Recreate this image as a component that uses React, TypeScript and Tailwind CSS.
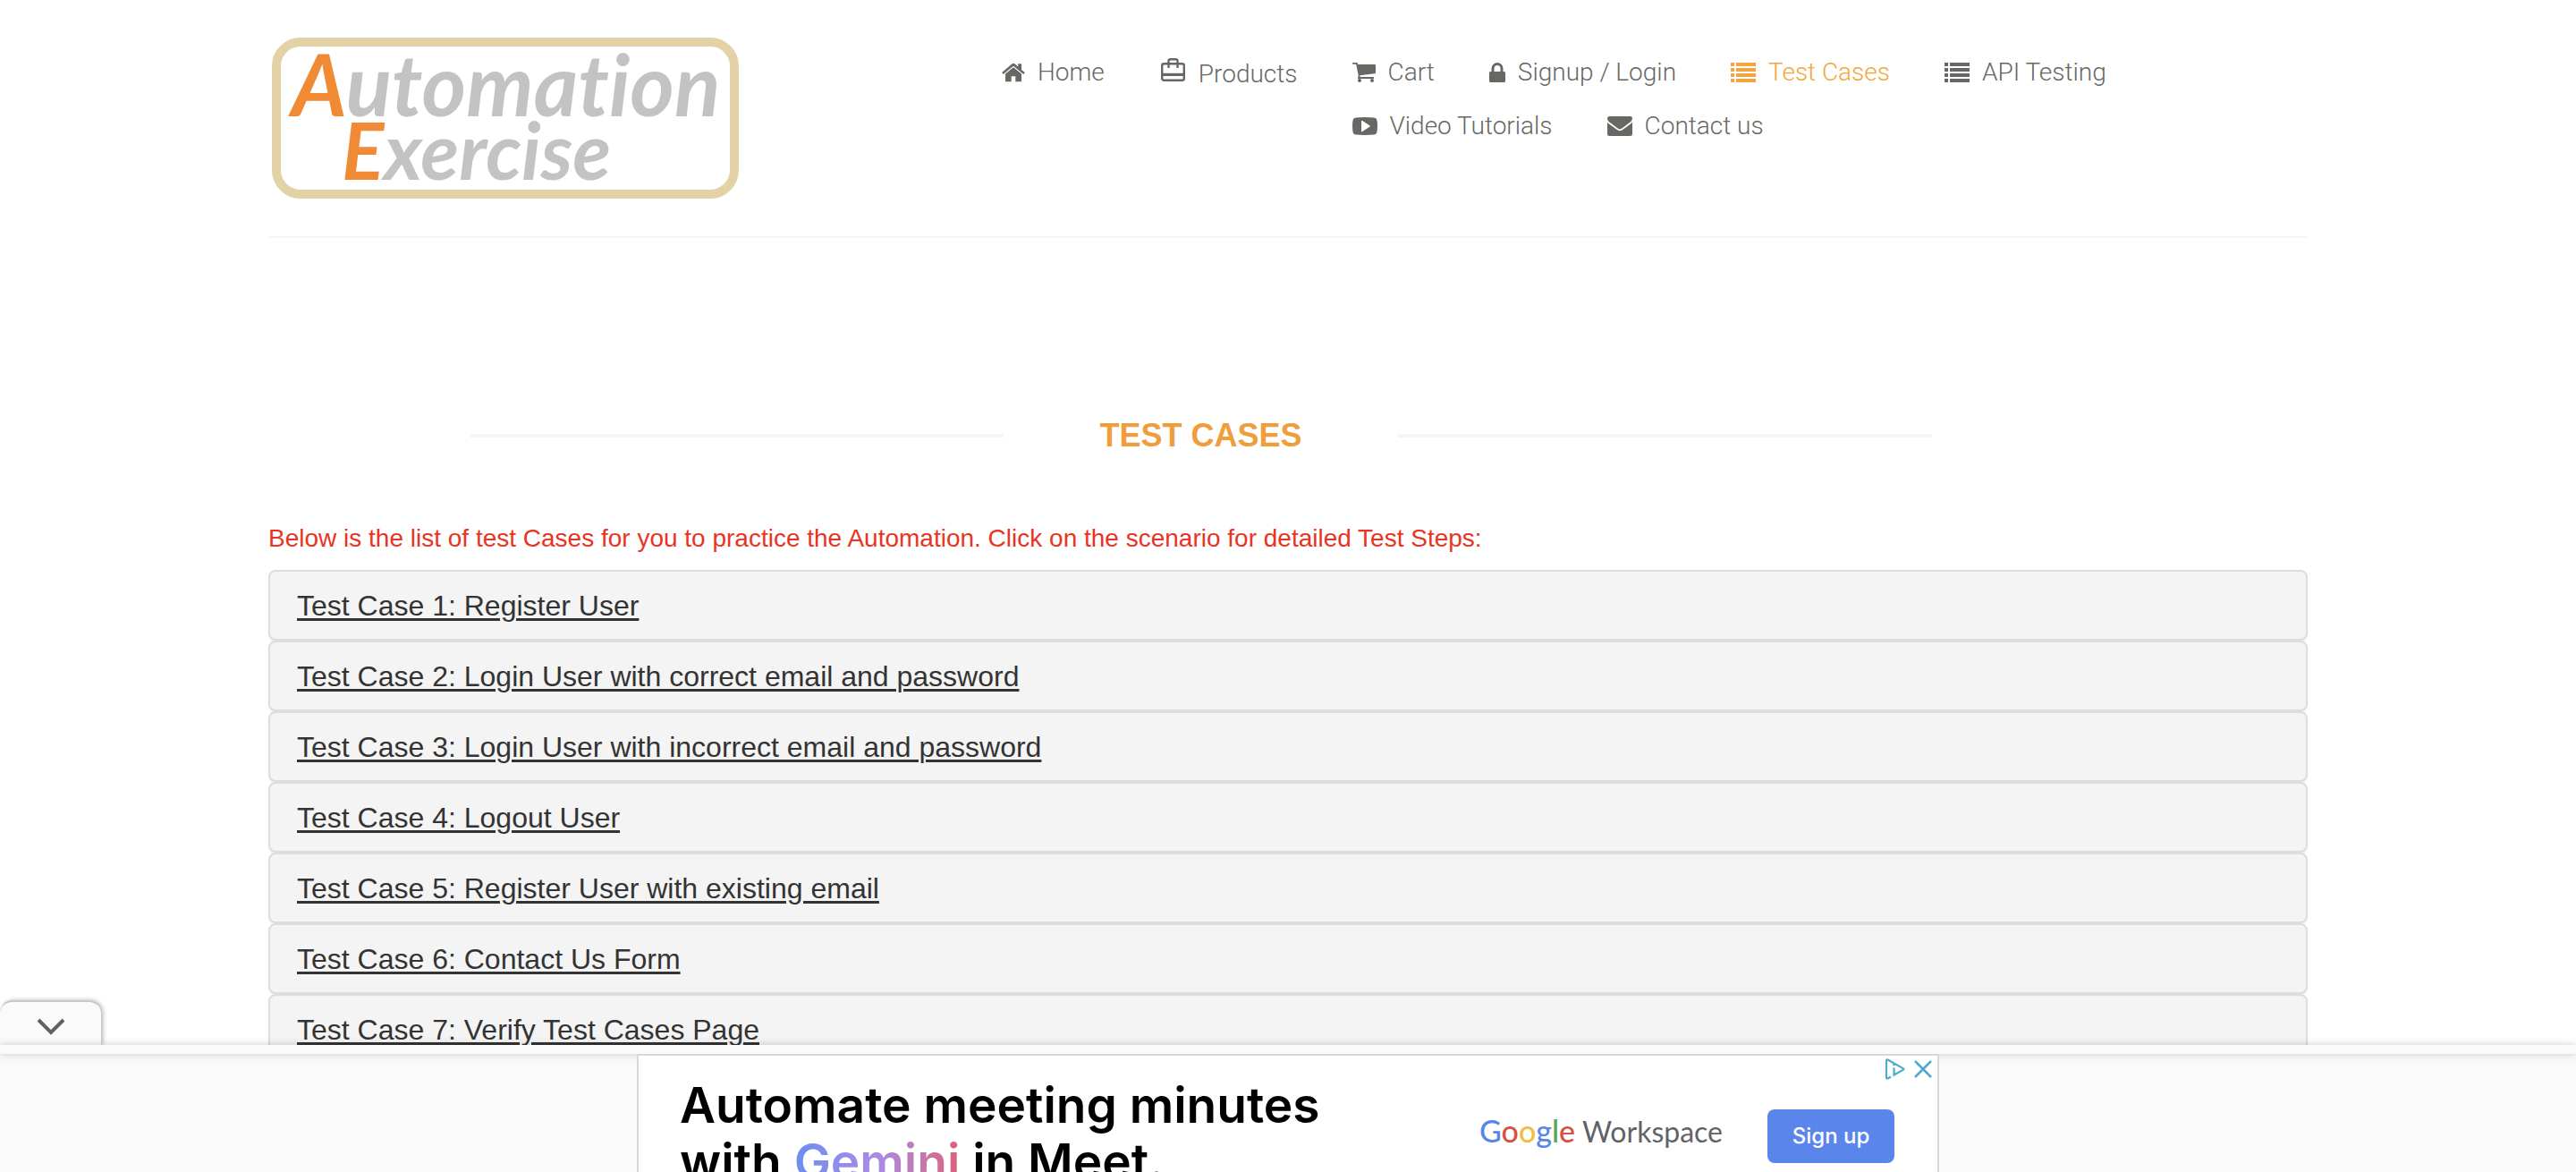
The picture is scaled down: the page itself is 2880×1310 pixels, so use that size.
import type { ReactNode } from 'react';

function IconHome() {
  return (
    <svg viewBox="0 0 26 22" className="h-[22px] w-[26px]" fill="currentColor" aria-hidden="true">
      <path d="M13 5.2 4 12.6V20.4q0 .8.8.8H10.700V15.200h4.600v6H21.200q.8 0 .8-.8V12.600Z" />
      <path d="M13 .8q.8 0 1.400.5l3.800 3.200V1.700q0-.5.5-.5h2.800q.5 0 .5.5v6.200l3.500 2.900q.4.4.1.800l-.9 1q-.3.400-.7.1L13 3.700 2 12.700q-.4.300-.7-.1l-.9-1q-.3-.4.1-.8L11.600 1.300Q12.200.8 13 .8Z" />
    </svg>
  );
}

function IconBag() {
  return (
    <svg viewBox="0 0 30 36" className="h-9 w-[30px]" fill="none" stroke="currentColor" strokeWidth="2.400" aria-hidden="true">
      <rect x="3.200" y="6.200" width="24.600" height="18.600" rx="2" />
      <path d="M10.500 11V3.200q0-2 2-2h6q2 0 2 2V11" />
      <path d="M3.200 18.400h24.600" strokeWidth="3.200" />
    </svg>
  );
}

function IconCart() {
  return (
    <svg viewBox="0 0 26 22" className="h-[22px] w-[26px]" fill="currentColor" aria-hidden="true">
      <path d="M.8 0h4.100q.8 0 1 .8L6.200 2H25q1 0 1 1v8.200q0 .9-.9 1L8.300 14.200l.3 1.900H23.200q.9 0 .9.900t-.9.900H7q-1 0-1-.9 0-.5.8-1.900L4.200 1.800H.8Q0 1.800 0 .9T.8 0Z" />
      <circle cx="8" cy="20" r="2" />
      <circle cx="22" cy="20" r="2" />
    </svg>
  );
}

function IconLock() {
  return (
    <svg viewBox="0 0 18 22" className="h-[22px] w-[18px]" fill="currentColor" aria-hidden="true">
      <path d="M2.500 10V6.500a6.500 6.500 0 0 1 13 0V10h1Q18 10 18 11.500v9q0 1.500-1.500 1.500h-15Q0 22 0 20.500v-9Q0 10 1.500 10ZM5.500 10h7V6.500a3.500 3.500 0 0 0-7 0Z" />
    </svg>
  );
}

function IconList() {
  return (
    <svg viewBox="0 0 28 22" className="h-[22px] w-7" fill="currentColor" aria-hidden="true">
      <path d="M0 0h4v4H0zM6 0h22v4H6zM0 6h4v4H0zM6 6h22v4H6zM0 12h4v4H0zM6 12h22v4H6zM0 18h4v4H0zM6 18h22v4H6z" />
    </svg>
  );
}

function IconVideo() {
  return (
    <svg viewBox="0 0 28 20" className="h-5 w-7" fill="currentColor" fillRule="evenodd" aria-hidden="true">
      <path d="M14 0q6 0 10 .4 2.600.2 3.200 2.200.8 2.600.8 7.400t-.8 7.400q-.6 2-3.200 2.200-4 .4-10 .4T4 19.600Q1.400 19.400.8 17.400 0 14.800 0 10T.8 2.600Q1.400.6 4 .4 8 0 14 0ZM10 4.200v11.600q0 .8.8.4l8.800-5.600q.7-.5 0-1.100L10.800 3.800Q10 3.400 10 4.200Z" />
    </svg>
  );
}

function IconMail() {
  return (
    <svg viewBox="0 0 28 22" className="h-[22px] w-7" fill="currentColor" aria-hidden="true">
      <path d="M2.500 0h23Q28 0 28 2.300 28 4.800 25.300 6.800L17 13q-1.800 1.400-3 1.400T11 13L2.700 6.800Q0 4.800 0 2.500 0 0 2.500 0Z" />
      <path d="M0 6.800Q.7 7.600 1.600 8.200L9.800 14.300q2.500 1.900 4.200 1.900t4.200-1.900L26.400 8.200Q27.300 7.600 28 6.800V19.500Q28 22 25.500 22h-23Q0 22 0 19.500Z" />
    </svg>
  );
}

function NavItem({ icon, label, active, low }: { icon: ReactNode; label: string; active?: boolean; low?: boolean }) {
  return (
    <li>
      <a
        href="#"
        className={`flex items-center gap-3.5 whitespace-nowrap ${active ? 'text-[#f2a63c]' : 'text-[#696763]'} ${low ? 'leading-[44px]' : 'leading-10'}`}
      >
        {icon}
        <span>{label}</span>
      </a>
    </li>
  );
}

const cases = [
  'Test Case 1: Register User',
  'Test Case 2: Login User with correct email and password',
  'Test Case 3: Login User with incorrect email and password',
  'Test Case 4: Logout User',
  'Test Case 5: Register User with existing email',
  'Test Case 6: Contact Us Form',
  'Test Case 7: Verify Test Cases Page',
];

function Logo() {
  return (
    <a
      href="#"
      aria-label="Automation Exercise"
      className="ml-1 flex h-[180px] w-[522px] shrink-0 flex-col rounded-[32px] border-10 border-[#e2d2a6] bg-white pt-1 pl-3 font-['Lato'] leading-[74px] font-bold whitespace-nowrap text-[#c3c3c3] italic [font-variant-ligatures:none]"
    >
      <span className="text-[95px]">
        <span className="text-[#f08a35]">A</span>utomation
      </span>
      <span className="pl-14 text-[88px]">
        <span className="text-[#f08a35]">E</span>xercise
      </span>
    </a>
  );
}

function Header() {
  return (
    <header className="flex items-start justify-between border-b-2 border-[#f5f5f5] pt-[42px] pb-[42px]">
      <Logo />
      <nav className="flex w-[1460px] items-start gap-[61px] pt-[19px] font-['Roboto'] text-[28px] font-light">
        <ul className="flex shrink-0 gap-[61px]">
          <NavItem icon={<IconHome />} label="Home" />
          <NavItem icon={<IconBag />} label="Products" low />
        </ul>
        <ul className="flex flex-wrap gap-x-[61px] gap-y-5">
          <NavItem icon={<IconCart />} label="Cart" />
          <NavItem icon={<IconLock />} label="Signup / Login" />
          <NavItem icon={<IconList />} label="Test Cases" active />
          <NavItem icon={<IconList />} label="API Testing" />
          <NavItem icon={<IconVideo />} label="Video Tutorials" />
          <NavItem icon={<IconMail />} label="Contact us" />
        </ul>
      </nav>
    </header>
  );
}

function AdBar() {
  return (
    <aside className="fixed inset-x-0 bottom-0 font-['Inter']">
      <button
        type="button"
        aria-label="Collapse advertisement"
        className="flex h-[50px] w-[113px] items-center justify-center rounded-t-[14px] border-t-2 border-[#c8c8c8] bg-[#fafafa] pt-2 shadow-[2px_0_5px_rgba(0,0,0,0.3)]"
      >
        <svg viewBox="0 0 32 20" className="h-5 w-8" fill="none" stroke="#616161" strokeWidth="4" aria-hidden="true">
          <path d="M2 2l14 14L30 2" />
        </svg>
      </button>
      <div className="relative h-2.5 bg-[#fafafa] shadow-[0_0_10px_rgba(0,0,0,0.2)]" />
      <div className="flex h-[132px] justify-center overflow-hidden bg-[#fafafa]">
        <div className="relative flex h-[180px] w-[1456px] items-start justify-between border-2 border-[#d8d8d8] bg-white pt-6 pr-12 pl-[46px]">
          <p className="text-[55px] leading-[63px] font-semibold whitespace-nowrap text-black">
            Automate meeting minutes
            <br />
            with{' '}
            <span className="bg-linear-to-r from-[#6b8df0] via-[#a98be6] to-[#d9607a] bg-clip-text text-transparent">Gemini</span> in
            Meet.
          </p>
          <div className="flex items-center gap-[50px] pt-[34px]">
            <div className="flex items-baseline gap-2 pb-3 font-['Lato'] whitespace-nowrap">
              <span className="text-[34px] font-medium">
                <span className="text-[#5a86ec]">G</span>
                <span className="text-[#d85140]">o</span>
                <span className="text-[#f0be42]">o</span>
                <span className="text-[#5a86ec]">g</span>
                <span className="text-[#58a55c]">l</span>
                <span className="text-[#d85140]">e</span>
              </span>
              <span className="text-[32px] text-[#5f6368]">Workspace</span>
            </div>
            <button type="button" className="h-[60px] w-[142px] rounded-lg bg-[#5a86ec] text-2xl font-medium text-white">
              Sign up
            </button>
          </div>
          <div className="absolute top-0.5 right-1.5 flex items-center gap-2 text-[#4fabc9]">
            <button type="button" aria-label="AdChoices">
              <svg viewBox="0 0 26 26" className="size-[26px]" fill="none" stroke="currentColor" strokeWidth="2.200" aria-hidden="true">
                <path d="M8 21.500 5 23.200Q3 24.300 3 22V4q0-2.300 2-1.200L22 12.400q1 .6 0 1.200L11.500 19.500V11.500" />
                <path d="M11.500 7v2.200" strokeWidth="2.600" />
              </svg>
            </button>
            <button type="button" aria-label="Close ad">
              <svg viewBox="0 0 20 20" className="size-5" fill="none" stroke="currentColor" strokeWidth="2.600" aria-hidden="true">
                <path d="M1 1l18 18M19 1 1 19" />
              </svg>
            </button>
          </div>
        </div>
      </div>
    </aside>
  );
}

export default function App() {
  return (
    <div className="h-screen overflow-hidden bg-white font-['Liberation_Sans',sans-serif]">
      <div className="mx-auto max-w-[2280px]">
        <Header />
        <main>
          <div className="flex items-center gap-[107px] pt-[201px] pr-[420px] pl-[225px]">
            <div className="h-1 flex-1 bg-[#f5f5f5]" />
            <h2 className="text-4xl leading-10 font-bold text-[#f09e3c]">TEST CASES</h2>
            <div className="h-1 flex-1 bg-[#f5f5f5]" />
          </div>
          <p className="pt-[75px] text-[28px] leading-10 text-[#e93323]">
            Below is the list of test Cases for you to practice the Automation. Click on the scenario for detailed Test Steps:
          </p>
          <ul className="pt-[15px]">
            {cases.map((c) => (
              <li key={c} className="rounded-lg border-2 border-[#ddd] bg-[#f4f4f4] px-[30px] pt-[21px] pb-[19px] shadow-[0_2px_2px_rgba(0,0,0,0.05)]">
                <a href="#" className="block text-[32px] leading-[35px] text-[#333] underline decoration-[3px] underline-offset-[3px]">
                  {c}
                </a>
              </li>
            ))}
          </ul>
        </main>
      </div>
      <AdBar />
    </div>
  );
}
